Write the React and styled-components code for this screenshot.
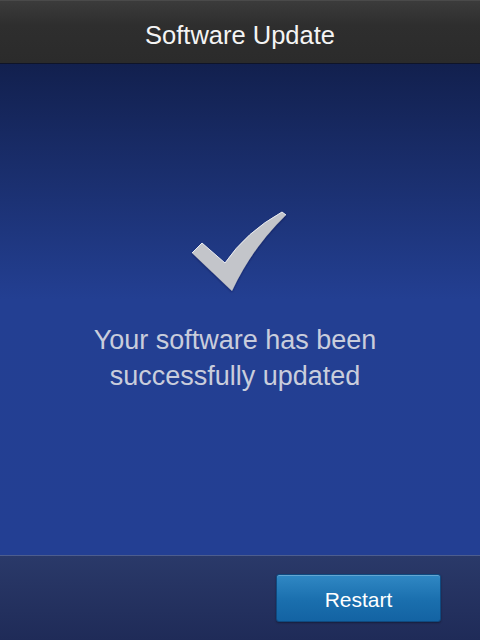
import styled, { createGlobalStyle } from "styled-components";

const GlobalStyle = createGlobalStyle`
  html, body {
    margin: 0;
    padding: 0;
    background: #1f2b57;
  }
  * {
    box-sizing: border-box;
  }
`;

const Screen = styled.div`
  width: 480px;
  height: 640px;
  display: flex;
  flex-direction: column;
  font-family: "Liberation Sans", Arial, sans-serif;
  overflow: hidden;
`;

const Header = styled.header`
  height: 64px;
  flex: none;
  padding-top: 4px;
  line-height: 60px;
  text-align: center;
  color: #f4f4f4;
  font-size: 25.5px;
  background: linear-gradient(#3b3b3b, #2e2e2e 40%, #2b2b2b);
  border-top: 1px solid #4a4a4a;
  border-bottom: 1px solid #0f1428;
`;

const Main = styled.main`
  flex: 1;
  display: flex;
  flex-direction: column;
  align-items: center;
  padding-top: 144px;
  background: linear-gradient(#12204e 0%, #1c3275 28%, #233f92 48%, #233f93 100%);
`;

const Check = styled.svg`
  display: block;
  width: 102px;
  height: 88px;
  margin-left: -2px;
`;

const Message = styled.p`
  margin: 26px 10px 0 0;
  font-size: 27px;
  line-height: 36px;
  text-align: center;
  color: #c9cddc;
`;

const Footer = styled.footer`
  height: 85px;
  flex: none;
  display: flex;
  justify-content: flex-end;
  padding: 18px 39px 0 0;
  border-top: 1px solid #4d5d8e;
  background: linear-gradient(#2a3969, #1f2b58);
`;

const Button = styled.button`
  width: 165px;
  height: 48px;
  padding: 3px 0 0;
  border: 1px solid #0f4a80;
  border-radius: 3px;
  color: #ffffff;
  font-family: inherit;
  font-size: 21px;
  background: linear-gradient(#3088c4, #1a6fae 55%, #1363a3);
  box-shadow: inset 0 1px 0 rgba(255, 255, 255, 0.25), 0 1px 2px rgba(0, 0, 0, 0.35);
  cursor: pointer;
`;

const CheckMark = () => (
  <Check viewBox="0 0 102 88">
    <defs>
      <filter id="sh" x="-10%" y="-10%" width="130%" height="130%">
        <feDropShadow dx="0" dy="1" stdDeviation="1" floodColor="#0a1540" floodOpacity="0.5" />
      </filter>
    </defs>
    <path
      d="M4 45 L14 35 L37 55 Q58 24 94 4 L98 7 Q64 40 44 83 Z"
      fill="#c3c5ca"
      filter="url(#sh)"
    />
    <path
      d="M4 45 L14 35 L37 55 Q58 24 94 4 L98 7"
      fill="none"
      stroke="#eceef2"
      strokeWidth="1"
    />
  </Check>
);

const App = () => (
  <>
    <GlobalStyle />
    <Screen>
      <Header>Software Update</Header>
      <Main>
        <CheckMark />
        <Message>
          Your software has been
          <br />
          successfully updated
        </Message>
      </Main>
      <Footer>
        <Button>Restart</Button>
      </Footer>
    </Screen>
  </>
);

export default App;
